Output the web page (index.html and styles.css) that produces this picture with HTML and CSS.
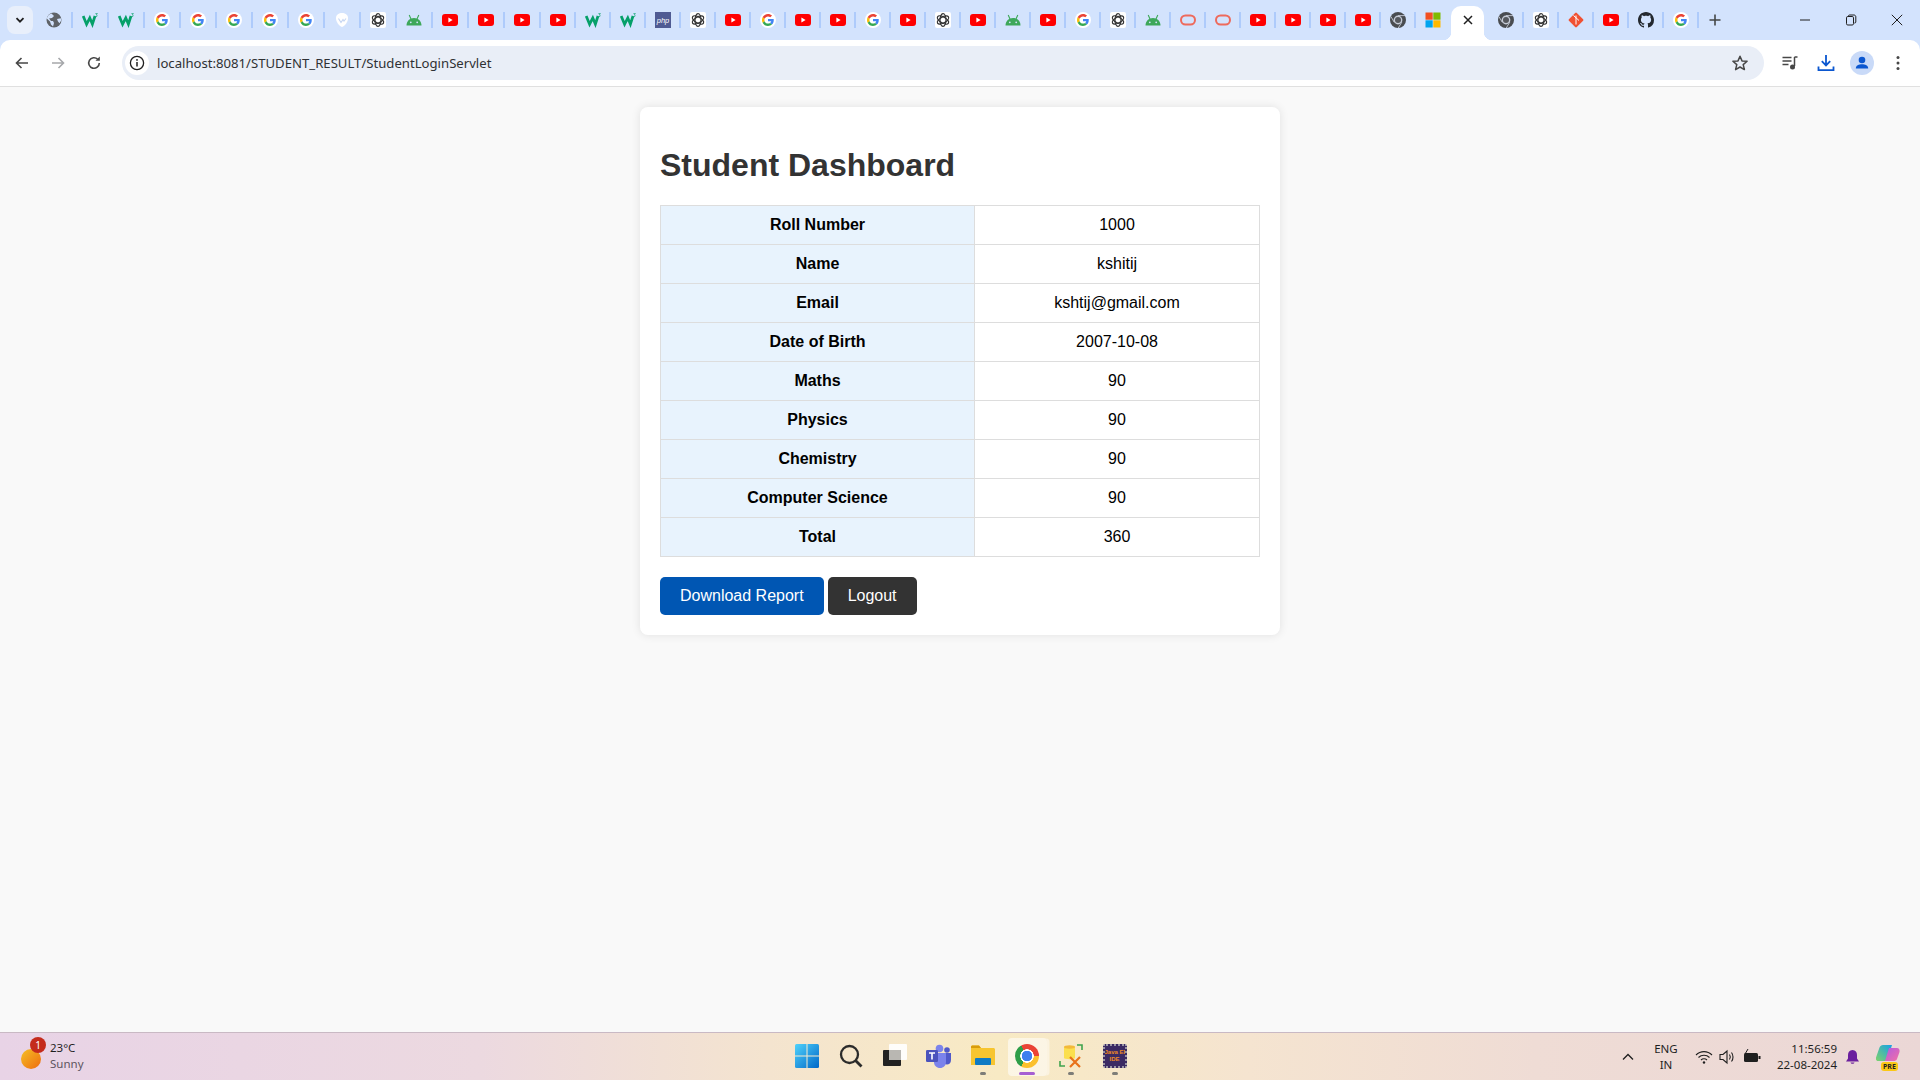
FILE: index.html
```html
<!DOCTYPE html>
<html lang="en">
<head>
<meta charset="utf-8">
<title>Student Dashboard</title>
<link rel="stylesheet" href="styles.css">
</head>
<body>
<svg class="defs" width="0" height="0" aria-hidden="true">
  <symbol id="i-g" viewBox="-8 -8 64 64">
    <circle cx="24" cy="24" r="32" fill="#fff"/>
    <path fill="#EA4335" d="M24 9.5c3.54 0 6.71 1.22 9.21 3.6l6.85-6.85C35.9 2.38 30.47 0 24 0 14.62 0 6.51 5.38 2.56 13.22l7.98 6.19C12.43 13.72 17.74 9.5 24 9.5z"/>
    <path fill="#4285F4" d="M46.98 24.55c0-1.57-.15-3.09-.38-4.55H24v9.02h12.94c-.58 2.96-2.26 5.48-4.78 7.18l7.73 6c4.51-4.18 7.09-10.36 7.09-17.65z"/>
    <path fill="#FBBC05" d="M10.53 28.59c-.48-1.45-.76-2.99-.76-4.59s.27-3.14.76-4.59l-7.98-6.19C.92 16.46 0 20.12 0 24c0 3.88.92 7.54 2.56 10.78l7.97-6.19z"/>
    <path fill="#34A853" d="M24 48c6.48 0 11.93-2.13 15.89-5.81l-7.73-6c-2.15 1.45-4.92 2.3-8.16 2.3-6.26 0-11.57-4.22-13.47-9.91l-7.98 6.19C6.51 42.62 14.62 48 24 48z"/>
  </symbol>
  <symbol id="i-yt" viewBox="0 0 16 16">
    <rect x="0" y="2" width="16" height="12" rx="3" fill="#f00"/>
    <path d="M6.4 5.6 10.6 8l-4.2 2.4z" fill="#fff"/>
  </symbol>
  <symbol id="i-w3" viewBox="0 0 16 16">
    <path d="M1.2 4 4.6 12.200 7.800 6 10.400 12.200 13 4" fill="none" stroke="#05a069" stroke-width="2.700"/>
    <path d="M13.400 1.600h2l-1 1.200c1 .2 1 1.900-.3 1.900h-.7" fill="none" stroke="#05a069" stroke-width=".7"/>
  </symbol>
  <symbol id="i-ai" viewBox="0 0 16 16">
    <rect width="16" height="16" rx="2" fill="#fff"/>
    <g fill="none" stroke="#333" stroke-width="1.200">
      <ellipse cx="8" cy="8" rx="3" ry="6.300"/>
      <ellipse cx="8" cy="8" rx="3" ry="6.300" transform="rotate(60 8 8)"/>
      <ellipse cx="8" cy="8" rx="3" ry="6.300" transform="rotate(120 8 8)"/>
    </g>
  </symbol>
  <symbol id="i-android" viewBox="0 0 16 16">
    <path d="M.5 13.500c0-4.500 3.300-7.500 7.500-7.500s7.500 3 7.500 7.500z" fill="#3ea85a"/>
    <path d="M3.200 3 5 7M12.800 3 11 7" stroke="#3ea85a" stroke-width="1.100" fill="none"/>
    <circle cx="4.800" cy="10.300" r=".9" fill="#d3e3fd"/>
    <circle cx="11.200" cy="10.300" r=".9" fill="#d3e3fd"/>
  </symbol>
  <symbol id="i-oracle" viewBox="0 0 16 16">
    <rect x="1" y="3.500" width="14" height="9" rx="4.500" fill="none" stroke="#ee6a5c" stroke-width="2"/>
  </symbol>
  <symbol id="i-chrome" viewBox="0 0 16 16">
    <circle cx="8" cy="8" r="8" fill="#494c50"/>
    <circle cx="8" cy="8" r="4.400" fill="#c5cbd6"/>
    <circle cx="8" cy="8" r="3" fill="#55585d"/>
    <path d="M8 3.600h7M4.200 10.200.9 4.500M11.800 10.200 8.200 16" stroke="#c5cbd6" stroke-width=".9" fill="none"/>
  </symbol>
  <symbol id="i-globe" viewBox="0 0 16 16">
    <circle cx="8" cy="8" r="7.500" fill="#5f6368"/>
    <path d="M5.500 1.500 8 4 6 6 3 6.500 5 9l2 0 1 2-1 3.500-2-2-1-3L.8 6.500C1.500 4 3 2.300 5.500 1.500zM11 7l3.800-.8.500 2-1.800 3-1.500-1.700z" fill="#d3e3fd"/>
  </symbol>
  <symbol id="i-shield" viewBox="0 0 16 16">
    <path d="M8 1C11 1 14 2.500 14 6c0 4-3 8-6 9-3-1-6-5-6-9 0-3.500 3-5 6-5z" fill="#fff"/>
    <path d="M4.500 6.500 7 10.500 9 7.500 10 9 12 6.500" fill="none" stroke="#c6d6f2" stroke-width="1.100"/>
  </symbol>
  <symbol id="i-git" viewBox="0 0 16 16">
    <rect x="2.400" y="2.400" width="11.200" height="11.200" rx="1.200" fill="#f05133" transform="rotate(45 8 8)"/>
    <path d="M8 3.500v9M5.500 3.500 11 8.500" stroke="#fff" stroke-width="1" fill="none"/>
  </symbol>
  <symbol id="i-gh" viewBox="0 0 16 16">
    <path fill="#24292f" d="M8 0C3.580 0 0 3.580 0 8c0 3.540 2.290 6.530 5.470 7.590.4.070.55-.17.55-.38 0-.19-.01-.82-.01-1.490-2.010.37-2.530-.49-2.690-.94-.09-.23-.48-.94-.82-1.130-.28-.15-.68-.52-.01-.53.63-.01 1.080.58 1.230.82.720 1.210 1.870.870 2.330.660.070-.52.280-.87.510-1.070-1.780-.2-3.640-.89-3.640-3.950 0-.87.310-1.590.820-2.150-.08-.2-.36-1.020.080-2.120 0 0 .670-.21 2.200.820.640-.18 1.320-.27 2-.27.680 0 1.360.090 2 .270 1.530-1.040 2.200-.82 2.200-.82.440 1.100.160 1.920.080 2.120.510.560.820 1.270.820 2.150 0 3.070-1.870 3.750-3.650 3.950.290.250.540.730.540 1.480 0 1.070-.01 1.930-.01 2.200 0 .210.150.460.550.380A8.013 8.013 0 0016 8c0-4.420-3.580-8-8-8z"/>
  </symbol>
  <symbol id="i-ms" viewBox="0 0 16 16">
    <rect x=".5" y=".5" width="7.200" height="7.200" fill="#f25022"/>
    <rect x="8.300" y=".5" width="7.200" height="7.200" fill="#7fba00"/>
    <rect x=".5" y="8.300" width="7.200" height="7.200" fill="#00a4ef"/>
    <rect x="8.300" y="8.300" width="7.200" height="7.200" fill="#ffb900"/>
  </symbol>
</svg>

<div class="screen">
  <header class="chrome">
    <div class="tabstrip">
      <button class="tablist" aria-label="Search tabs">
        <svg width="12" height="12" viewBox="0 0 12 12"><path d="M2.500 4.200 6 7.700l3.500-3.500" fill="none" stroke="#1f1f1f" stroke-width="1.800"/></svg>
      </button>
      <div class="tab"><svg class="fav"><use href="#i-globe"/></svg></div>
      <div class="tab"><svg class="fav"><use href="#i-w3"/></svg></div>
      <div class="tab"><svg class="fav"><use href="#i-w3"/></svg></div>
      <div class="tab"><svg class="fav"><use href="#i-g"/></svg></div>
      <div class="tab"><svg class="fav"><use href="#i-g"/></svg></div>
      <div class="tab"><svg class="fav"><use href="#i-g"/></svg></div>
      <div class="tab"><svg class="fav"><use href="#i-g"/></svg></div>
      <div class="tab"><svg class="fav"><use href="#i-g"/></svg></div>
      <div class="tab"><svg class="fav"><use href="#i-shield"/></svg></div>
      <div class="tab"><svg class="fav"><use href="#i-ai"/></svg></div>
      <div class="tab"><svg class="fav"><use href="#i-android"/></svg></div>
      <div class="tab"><svg class="fav"><use href="#i-yt"/></svg></div>
      <div class="tab"><svg class="fav"><use href="#i-yt"/></svg></div>
      <div class="tab"><svg class="fav"><use href="#i-yt"/></svg></div>
      <div class="tab slim"><svg class="fav"><use href="#i-yt"/></svg></div>
      <div class="tab slim"><svg class="fav"><use href="#i-w3"/></svg></div>
      <div class="tab slim"><svg class="fav"><use href="#i-w3"/></svg></div>
      <div class="tab slim"><svg class="fav" viewBox="0 0 16 16"><rect width="16" height="20" y="-2" rx="2" fill="#4f5b93"/><text x="8" y="10.500" class="php-text">php</text></svg></div>
      <div class="tab slim"><svg class="fav"><use href="#i-ai"/></svg></div>
      <div class="tab slim"><svg class="fav"><use href="#i-yt"/></svg></div>
      <div class="tab slim"><svg class="fav"><use href="#i-g"/></svg></div>
      <div class="tab slim"><svg class="fav"><use href="#i-yt"/></svg></div>
      <div class="tab slim"><svg class="fav"><use href="#i-yt"/></svg></div>
      <div class="tab slim"><svg class="fav"><use href="#i-g"/></svg></div>
      <div class="tab slim"><svg class="fav"><use href="#i-yt"/></svg></div>
      <div class="tab slim"><svg class="fav"><use href="#i-ai"/></svg></div>
      <div class="tab slim"><svg class="fav"><use href="#i-yt"/></svg></div>
      <div class="tab slim"><svg class="fav"><use href="#i-android"/></svg></div>
      <div class="tab slim"><svg class="fav"><use href="#i-yt"/></svg></div>
      <div class="tab slim"><svg class="fav"><use href="#i-g"/></svg></div>
      <div class="tab slim"><svg class="fav"><use href="#i-ai"/></svg></div>
      <div class="tab slim"><svg class="fav"><use href="#i-android"/></svg></div>
      <div class="tab slim"><svg class="fav"><use href="#i-oracle"/></svg></div>
      <div class="tab slim"><svg class="fav"><use href="#i-oracle"/></svg></div>
      <div class="tab slim"><svg class="fav"><use href="#i-yt"/></svg></div>
      <div class="tab slim"><svg class="fav"><use href="#i-yt"/></svg></div>
      <div class="tab slim"><svg class="fav"><use href="#i-yt"/></svg></div>
      <div class="tab slim"><svg class="fav"><use href="#i-yt"/></svg></div>
      <div class="tab slim"><svg class="fav"><use href="#i-chrome"/></svg></div>
      <div class="tab slim last-before-active"><svg class="fav"><use href="#i-ms"/></svg></div>
      <div class="tab-active">
        <svg width="12" height="12" viewBox="0 0 12 12"><path d="M2 2l8 8M10 2l-8 8" stroke="#1f1f1f" stroke-width="1.500" fill="none"/></svg>
      </div>
      <div class="tab slim after-active"><svg class="fav"><use href="#i-chrome"/></svg></div>
      <div class="tab slim"><svg class="fav"><use href="#i-ai"/></svg></div>
      <div class="tab slim"><svg class="fav"><use href="#i-git"/></svg></div>
      <div class="tab slim"><svg class="fav"><use href="#i-yt"/></svg></div>
      <div class="tab slim"><svg class="fav"><use href="#i-gh"/></svg></div>
      <div class="tab slim"><svg class="fav"><use href="#i-g"/></svg></div>
      <button class="newtab" aria-label="New tab">
        <svg width="14" height="14" viewBox="0 0 14 14"><path d="M7 1.500v11M1.500 7h11" stroke="#444746" stroke-width="1.600" fill="none"/></svg>
      </button>
      <div class="winctl">
        <span class="winbtn"><svg width="12" height="12" viewBox="0 0 12 12"><path d="M1 6h10" stroke="#1f1f1f" stroke-width="1"/></svg></span>
        <span class="winbtn"><svg width="12" height="12" viewBox="0 0 12 12"><path d="M3.500 2.500V2c0-.6.4-1 1-1h4.500c1 0 1.800.8 1.800 1.800V8c0 .6-.4 1-1 1h-.5" fill="none" stroke="#1f1f1f"/><rect x="1.500" y="2.500" width="7" height="8.500" rx="1.300" fill="none" stroke="#1f1f1f"/></svg></span>
        <span class="winbtn"><svg width="12" height="12" viewBox="0 0 12 12"><path d="M.8.800l10.400 10.400M11.200.800.800 11.200" stroke="#1f1f1f" stroke-width="1" fill="none"/></svg></span>
      </div>
    </div>
    <div class="toolbar">
      <span class="tbtn"><svg width="16" height="16" viewBox="0 0 16 16"><path d="M14 8H3M7.500 3 2.500 8l5 5" fill="none" stroke="#474747" stroke-width="1.600"/></svg></span>
      <span class="tbtn"><svg width="16" height="16" viewBox="0 0 16 16"><path d="M2 8h11M8.500 3l5 5-5 5" fill="none" stroke="#a6a8ab" stroke-width="1.600"/></svg></span>
      <span class="tbtn"><svg width="16" height="16" viewBox="0 0 16 16"><path d="M13.300 8a5.300 5.300 0 1 1-1.600-3.800" fill="none" stroke="#474747" stroke-width="1.600"/><path d="M13.800 1.500v4.300H9.500z" fill="#474747"/></svg></span>
      <div class="omnibox">
        <span class="siteinfo"><svg width="16" height="16" viewBox="0 0 16 16"><circle cx="8" cy="8" r="6.600" fill="none" stroke="#1f1f1f" stroke-width="1.300"/><path d="M8 7v4.500" stroke="#1f1f1f" stroke-width="1.500"/><circle cx="8" cy="4.900" r=".9" fill="#1f1f1f"/></svg></span>
        <span class="url">localhost:8081/STUDENT_RESULT/StudentLoginServlet</span>
        <svg class="star" width="18" height="18" viewBox="0 0 18 18"><path d="M9 2.200l2 4.700 5.100.4-3.900 3.300 1.200 5L9 13l-4.400 2.600 1.200-5-3.900-3.300 5.100-.4z" fill="none" stroke="#474747" stroke-width="1.500" stroke-linejoin="round"/></svg>
      </div>
      <div class="tools">
        <span class="tbtn"><svg width="18" height="18" viewBox="0 0 18 18"><path d="M1.500 3.500h9M1.500 7h9M1.500 10.500h6" stroke="#474747" stroke-width="1.500" fill="none"/><path d="M13.500 3v9" stroke="#474747" stroke-width="1.500"/><path d="M13.500 3h3" stroke="#474747" stroke-width="1.500"/><circle cx="11.500" cy="13" r="2.500" fill="#474747"/></svg></span>
        <span class="tbtn"><svg width="18" height="18" viewBox="0 0 18 18"><path d="M9 1v10M4.800 7.200 9 11.400l4.200-4.200M1.500 12.500v3.700h15v-3.700" fill="none" stroke="#0b57d0" stroke-width="1.800"/></svg></span>
        <span class="tbtn"><span class="avatar"><svg width="20" height="20" viewBox="0 0 20 20"><circle cx="10" cy="7" r="3.300" fill="#0b57d0"/><path d="M3.800 15.500c0-3 3-4.300 6.200-4.300s6.200 1.300 6.200 4.300z" fill="#0b57d0"/></svg></span></span>
        <span class="tbtn"><svg width="16" height="16" viewBox="0 0 16 16"><circle cx="8" cy="2.500" r="1.500" fill="#474747"/><circle cx="8" cy="8" r="1.500" fill="#474747"/><circle cx="8" cy="13.500" r="1.500" fill="#474747"/></svg></span>
      </div>
    </div>
  </header>

  <main class="page">
    <section class="card">
      <h1 class="title">Student Dashboard</h1>
      <table class="marks">
        <colgroup><col class="col-head"><col></colgroup>
        <tr><th>Roll Number</th><td>1000</td></tr>
        <tr><th>Name</th><td>kshitij</td></tr>
        <tr><th>Email</th><td>kshtij@gmail.com</td></tr>
        <tr><th>Date of Birth</th><td>2007-10-08</td></tr>
        <tr><th>Maths</th><td>90</td></tr>
        <tr><th>Physics</th><td>90</td></tr>
        <tr><th>Chemistry</th><td>90</td></tr>
        <tr><th>Computer Science</th><td>90</td></tr>
        <tr><th>Total</th><td>360</td></tr>
      </table>
      <div class="actions">
        <button class="btn btn-blue">Download Report</button>
        <button class="btn btn-dark">Logout</button>
      </div>
    </section>
  </main>

  <footer class="taskbar">
    <div class="tb-left">
      <span class="sun"><span class="badge">1</span></span>
      <div class="weather">
        <span class="temp">23°C</span>
        <span class="cond">Sunny</span>
      </div>
    </div>
    <div class="tb-center">
      <span class="app">
        <svg width="24" height="24" viewBox="0 0 24 24"><defs><linearGradient id="win" x1="0" y1="0" x2="1" y2="1"><stop offset="0" stop-color="#4fd2fb"/><stop offset="1" stop-color="#0067c8"/></linearGradient></defs><rect width="24" height="24" rx="1.500" fill="url(#win)"/><path d="M12 0v24M0 12h24" stroke="#f6ecd0" stroke-width="1"/></svg>
      </span>
      <span class="app">
        <svg width="24" height="24" viewBox="0 0 24 24"><circle cx="10.500" cy="10.500" r="8.500" fill="none" stroke="#2b2b2b" stroke-width="2.300"/><path d="M16.500 16.500 22.500 22.500" stroke="#2b2b2b" stroke-width="2.800"/></svg>
      </span>
      <span class="app">
        <svg width="24" height="24" viewBox="0 0 24 24"><rect x="0" y="6" width="18" height="16" rx="1" fill="#222"/><rect x="6" y="0" width="18" height="16" rx="1" fill="#fff" fill-opacity=".9"/><rect x="6" y="6" width="12" height="10" fill="#b9b7b2"/></svg>
      </span>
      <span class="app">
        <svg width="26" height="24" viewBox="0 0 26 24"><circle cx="13.500" cy="4.500" r="3.800" fill="#7b83eb"/><circle cx="21" cy="6" r="2.800" fill="#5059c9"/><path d="M17 9h8v7c0 3-2 4.500-4 4.500S17 19 17 16z" fill="#5059c9"/><path d="M8 9h12v9c0 3.500-2.500 6-6 6s-6-2.500-6-6z" fill="#7b83eb"/><rect x="0" y="6" width="12" height="12" rx="1.300" fill="#4b53bc"/><path d="M3 9h6M6 9v6.500" stroke="#fff" stroke-width="1.600" fill="none"/></svg>
      </span>
      <span class="app running">
        <svg width="24" height="24" viewBox="0 0 24 24"><path d="M0 3c0-1 .7-1.500 1.500-1.500H8L10 4h12.500c.8 0 1.500.7 1.500 1.500V21H0z" fill="#f7c52f"/><path d="M0 3c0-1 .7-1.500 1.500-1.500H8L10 4H0z" fill="#d89c0b"/><rect x="4" y="14" width="16" height="7" rx="1" fill="#0f7bc4"/></svg>
      </span>
      <span class="app active">
        <span class="gchrome"></span>
      </span>
      <span class="app running">
        <svg width="24" height="24" viewBox="0 0 24 24"><path d="M5 3c0-1.500 11-1.500 11 0v11c0 1.500-11 1.500-11 0z" fill="#fbdf4e"/><ellipse cx="10.500" cy="3" rx="5.500" ry="1.700" fill="#f3b93a"/><path d="M18 1h5v5M1 17v5h5" fill="none" stroke="#3fa34d" stroke-width="1.600"/><path d="M11 13l10 10M21 13 11 23" stroke="#e8711a" stroke-width="2.200"/></svg>
      </span>
      <span class="app running">
        <span class="javaide">Java EE<br>IDE</span>
      </span>
    </div>
    <div class="tb-right">
      <svg class="chev" width="14" height="14" viewBox="0 0 14 14"><path d="M2 9.500 7 4.500l5 5" fill="none" stroke="#1f1f1f" stroke-width="1.300"/></svg>
      <div class="lang"><span>ENG</span><span>IN</span></div>
      <div class="sys">
        <svg width="18" height="16" viewBox="0 0 18 16"><g fill="none" stroke="#1f1f1f" stroke-width="1.100"><path d="M1 6c4.500-4.500 11.500-4.500 16 0"/><path d="M3.500 8.500c3-3 8-3 11 0"/><path d="M6 11c1.700-1.700 4.300-1.700 6 0"/></g><circle cx="9" cy="13.500" r="1.200" fill="#1f1f1f"/></svg>
        <svg width="18" height="16" viewBox="0 0 18 16"><path d="M1 5.500h3L8 2v12L4 10.500H1z" fill="none" stroke="#1f1f1f" stroke-width="1.100"/><path d="M10.500 5.500c1 1.500 1 3.500 0 5M12.500 3.500c2 2.500 2 6.500 0 9" fill="none" stroke="#1f1f1f" stroke-width="1.100"/></svg>
        <svg width="18" height="16" viewBox="0 0 18 16"><rect x="1" y="4" width="14" height="9" rx="1.500" fill="#1f1f1f"/><rect x="15.500" y="7" width="2" height="3" fill="#1f1f1f"/><path d="M5 0 2 5h3L3.500 8" stroke="#1f1f1f" fill="none"/></svg>
      </div>
      <div class="clock"><span>11:56:59</span><span>22-08-2024</span></div>
      <svg class="bell" width="15" height="16" viewBox="0 0 15 16"><path d="M7.500 1C4.500 1 3 3.200 3 6v3.500L1 12.500h13l-2-3V6c0-2.800-1.500-5-4.500-5z" fill="#6b1f9e"/><path d="M5.500 13.500c.3 1.700 3.700 1.700 4 0z" fill="#6b1f9e"/></svg>
      <span class="copilot">
        <svg width="24" height="18" viewBox="0 0 24 18"><defs><linearGradient id="cpa" x1="0" y1="1" x2="1" y2="0"><stop offset="0" stop-color="#7ed36a"/><stop offset="1" stop-color="#16a0e8"/></linearGradient><linearGradient id="cpb" x1="0" y1="0" x2="1" y2="1"><stop offset="0" stop-color="#b25be0"/><stop offset="1" stop-color="#f36fa5"/></linearGradient></defs><path d="M7 1h9L11 17H2C0 17-.5 15 .2 13L3.500 3.500C4 2 5.500 1 7 1z" fill="url(#cpa)"/><path d="M13 4h8c2 0 3 2 2.500 4L21 15c-.5 1.500-2 2-3.500 2H9z" fill="url(#cpb)"/></svg>
        <span class="pre">PRE</span>
      </span>
    </div>
  </footer>
</div>
</body>
</html>
```

FILE: styles.css
```css
* { box-sizing: border-box; }

html, body {
  margin: 0;
  height: 100%;
  overflow: hidden;
}

body {
  font-family: "Liberation Sans", Arial, sans-serif;
  background: #f9f9f9;
}

.defs { display: block; width: 0; height: 0; }

.screen {
  display: flex;
  flex-direction: column;
  height: 100vh;
}

/* Browser chrome */
.chrome {
  background: #d3e3fd;
  flex: none;
}

.tabstrip {
  display: flex;
  align-items: center;
  height: 40px;
}

.tablist {
  flex: none;
  width: 26px;
  height: 28px;
  margin: 0 4px 0 7px;
  padding: 0;
  border: 0;
  border-radius: 8px;
  background: #e8effb;
  display: flex;
  align-items: center;
  justify-content: center;
}

.tab {
  flex: none;
  width: 36px;
  height: 16px;
  border-right: 2px solid #aecbfb;
  display: flex;
  align-items: center;
  justify-content: center;
}

.tab.slim { width: 35px; }
.tab.last-before-active { border-right-color: transparent; }
.tab.after-active { margin-left: 5px; }

.fav {
  width: 16px;
  height: 16px;
  display: block;
}

.php-text {
  font-family: "Liberation Sans", Arial, sans-serif;
  font-size: 7.500px;
  font-style: italic;
  fill: #fff;
  text-anchor: middle;
}

.tab-active {
  flex: none;
  position: relative;
  width: 33px;
  height: 34px;
  margin-top: 6px;
  background: #fff;
  border-radius: 10px 10px 0 0;
  display: flex;
  align-items: flex-start;
  justify-content: center;
  padding-top: 8px;
}

.tab-active::before,
.tab-active::after {
  content: "";
  position: absolute;
  bottom: 0;
  width: 8px;
  height: 8px;
}

.tab-active::before {
  left: -8px;
  background: radial-gradient(circle at 0 0, transparent 8px, #fff 8.500px);
}

.tab-active::after {
  right: -8px;
  background: radial-gradient(circle at 100% 0, transparent 8px, #fff 8.500px);
}

.newtab {
  flex: none;
  width: 30px;
  height: 28px;
  margin-left: 1px;
  padding: 0;
  border: 0;
  background: transparent;
  display: flex;
  align-items: center;
  justify-content: center;
}

.winctl {
  margin-left: auto;
  display: flex;
}

.winbtn {
  width: 46px;
  height: 40px;
  display: flex;
  align-items: center;
  justify-content: center;
}

.toolbar {
  display: flex;
  align-items: center;
  height: 47px;
  padding: 0 4px 1px;
  background: #fff;
  border-bottom: 1px solid #e0e0e0;
  border-radius: 10px 10px 0 0;
}

.tbtn {
  flex: none;
  width: 36px;
  height: 34px;
  display: flex;
  align-items: center;
  justify-content: center;
}

.omnibox {
  flex: 1;
  height: 34px;
  margin-left: 10px;
  padding: 0 15px 0 3px;
  border-radius: 17px;
  background: #e9eef7;
  display: flex;
  align-items: center;
}

.siteinfo {
  flex: none;
  width: 24px;
  height: 24px;
  border-radius: 50%;
  background: #fff;
  display: flex;
  align-items: center;
  justify-content: center;
}

.url {
  flex: 1;
  margin-left: 8px;
  font-family: "Noto Sans", "Open Sans", sans-serif;
  font-size: 13.150px;
  color: #2f3134;
}

.star { flex: none; }

.tools {
  flex: none;
  display: flex;
  margin-left: 8px;
}

.avatar {
  width: 24px;
  height: 24px;
  border-radius: 50%;
  background: #c9daf8;
  display: flex;
  align-items: center;
  justify-content: center;
}

/* Page */
.page {
  flex: 1;
  min-height: 0;
}

.card {
  width: 640px;
  margin: 20px auto 0;
  padding: 20px;
  background: #fff;
  border-radius: 8px;
  box-shadow: 0 0 10px rgba(0, 0, 0, 0.1);
}

.title {
  margin: 20px 0 21px;
  font-size: 32px;
  font-weight: 700;
  color: #333;
}

.marks {
  width: 600px;
  table-layout: fixed;
  border-collapse: collapse;
  font-size: 16px;
}

.col-head { width: 314px; }

.marks th,
.marks td {
  padding: 10px;
  border: 1px solid #ddd;
  text-align: center;
  color: #000;
}

.marks th {
  background: #e8f3fd;
  font-weight: 700;
}

.actions {
  display: flex;
  gap: 4px;
  margin-top: 20px;
}

.btn {
  padding: 10px 20px;
  border: 0;
  border-radius: 5px;
  font-family: "Liberation Sans", Arial, sans-serif;
  font-size: 16px;
  color: #fff;
}

.btn-blue { background: #0056b3; }
.btn-dark { background: #333; }

/* Taskbar */
.taskbar {
  flex: none;
  height: 48px;
  display: grid;
  grid-template-columns: 1fr auto 1fr;
  align-items: center;
  border-top: 1px solid #c9b9c4;
  background: linear-gradient(90deg, #e8d3e6 0%, #ecd9e0 25%, #f4e4cf 40%, #f8eac4 52%, #f5e4d0 65%, #efdcd5 80%, #ebd7d6 100%);
  font-family: "Noto Sans", "Open Sans", sans-serif;
  color: #1f1f1f;
}

.tb-left {
  display: flex;
  align-items: center;
  padding-left: 21px;
}

.sun {
  position: relative;
  width: 20px;
  height: 20px;
  border-radius: 50%;
  background: linear-gradient(135deg, #f5c026, #ee6c0e);
  margin-top: 4px;
}

.badge {
  position: absolute;
  top: -12px;
  left: 9px;
  width: 16px;
  height: 16px;
  border-radius: 50%;
  background: #c42b1c;
  color: #fff;
  font-size: 10px;
  line-height: 16px;
  text-align: center;
}

.weather {
  display: flex;
  flex-direction: column;
  margin-left: 9px;
  font-size: 11.500px;
  line-height: 16px;
}

.temp { margin-top: -1px; }
.cond { color: #5d5560; }

.tb-center {
  display: flex;
  align-items: center;
  gap: 0;
  padding-left: 1px;
}

.app {
  position: relative;
  width: 44px;
  height: 38px;
  padding-bottom: 2px;
  display: flex;
  align-items: center;
  justify-content: center;
}

.app.running::after {
  content: "";
  position: absolute;
  left: 19px;
  bottom: 1px;
  width: 6px;
  height: 3px;
  border-radius: 2px;
  background: #7d7d78;
}

.app.active::before {
  content: "";
  position: absolute;
  top: 0;
  bottom: 0;
  left: 3px;
  right: 2px;
  border-radius: 4px;
  background: rgba(255, 255, 255, 0.55);
  box-shadow: 3px 0 0 -0.500px rgba(255, 255, 255, 0.45);
}

.app.active::after {
  content: "";
  position: absolute;
  left: 14px;
  bottom: 1px;
  width: 16px;
  height: 3px;
  border-radius: 2px;
  background: #a65fd2;
}

.gchrome {
  position: relative;
  width: 24px;
  height: 24px;
  border-radius: 50%;
  background:
    radial-gradient(circle, #3d80f0 0 5px, #fff 5.500px 6.500px, transparent 7px),
    conic-gradient(#ea4335 0 90deg, #fbc02d 90deg 210deg, #2e9e48 210deg 330deg, #ea4335 330deg);
}

.javaide {
  width: 24px;
  height: 24px;
  border: 2px dotted #9a96a6;
  border-radius: 2px;
  background: #3b2a63;
  color: #f08a24;
  font-family: "Liberation Sans", Arial, sans-serif;
  font-size: 6px;
  font-weight: 700;
  line-height: 7px;
  text-align: center;
  padding-top: 3px;
  white-space: nowrap;
  overflow: hidden;
}

.tb-right {
  display: flex;
  align-items: center;
  justify-content: flex-end;
  padding-right: 20px;
}

.chev { margin-right: 16px; }

.lang {
  display: flex;
  flex-direction: column;
  align-items: center;
  font-size: 11.500px;
  line-height: 16px;
  width: 30px;
}

.sys {
  display: flex;
  align-items: center;
  gap: 6px;
  margin-left: 14px;
}

.clock {
  display: flex;
  flex-direction: column;
  align-items: flex-end;
  margin-left: 16px;
  font-size: 11.500px;
  line-height: 16px;
}

.bell { margin-left: 8px; }

.copilot {
  position: relative;
  width: 24px;
  height: 28px;
  margin-left: 16px;
  padding-top: 1px;
}

.pre {
  position: absolute;
  left: 5px;
  bottom: 0;
  padding: 0 2px;
  border-radius: 3px;
  background: #fbc815;
  color: #1f1f1f;
  font-size: 7px;
  font-weight: 700;
  line-height: 9px;
}
```
